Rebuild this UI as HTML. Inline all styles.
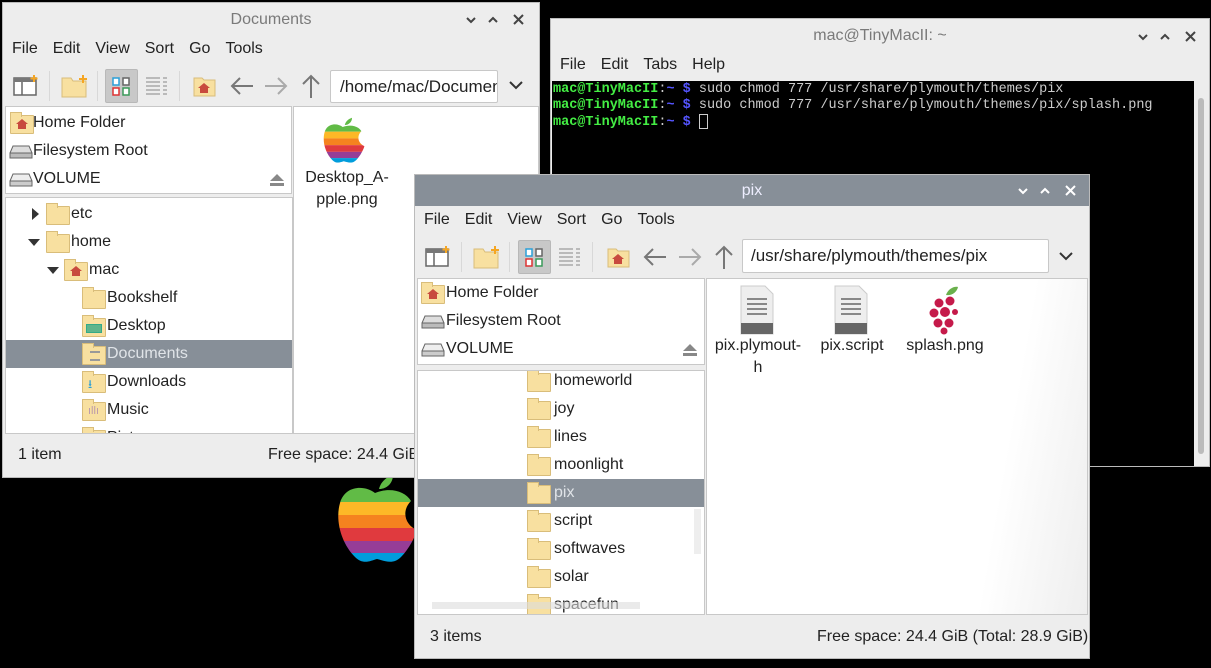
<!DOCTYPE html>
<html><head><meta charset="utf-8"><style>
*{margin:0;padding:0;box-sizing:border-box}
body{width:1211px;height:668px;background:#000;position:relative;overflow:hidden;font-family:"Liberation Sans",sans-serif;font-size:16px;color:#222}
.a{position:absolute}
.win{position:absolute;background:#ededed;border:1px solid #bbb;overflow:hidden}
.title{position:absolute;left:0;right:0;top:0;text-align:center;color:#7a7a7a;font-size:16px}
.menu span{margin-right:15px}
.box{position:absolute;background:#fff;border:1px solid #c8c8c8;overflow:hidden}
.row{position:absolute;left:0;right:0;height:28px;line-height:28px;white-space:nowrap}
.fold{position:absolute;width:24px;height:19px;background:#f8e0a0;border:1px solid #d9bd7a;border-radius:1px}
.fold:before{content:"";position:absolute;left:-1px;top:-4px;width:10px;height:4px;background:#f8e0a0;border:1px solid #d9bd7a;border-bottom:none}
.sel{background:#878f98;color:#e0e4e8}
.mono{font-family:"Liberation Mono",monospace;font-size:13.5px}
</style></head><body>

<svg class="a" style="left:335px;top:475px" width="85" height="90" viewBox="0 0 85 90">
<defs><clipPath id="ap"><path d="M40 18 C30 10 10 10 5 28 C0 45 6 68 20 82 C28 90 35 86 42 84 C50 86 58 90 66 82 C74 74 80 62 82 55 C70 50 66 36 76 26 C70 16 55 12 40 18Z"/></clipPath></defs>
<path d="M44 14 C46 6 52 2 58 0 C58 8 52 14 44 14Z" fill="#61bb46"/>
<g clip-path="url(#ap)"><rect y="0" width="85" height="27" fill="#61bb46"/><rect y="27" width="85" height="13" fill="#fdb827"/><rect y="40" width="85" height="13" fill="#f5821f"/><rect y="53" width="85" height="13" fill="#e03a3e"/><rect y="66" width="85" height="12" fill="#963d97"/><rect y="78" width="85" height="12" fill="#009ddc"/></g>
</svg>

<!-- Documents window -->
<div class="win" style="left:2px;top:2px;width:538px;height:476px">
 <div class="title" style="top:8px">Documents</div>
 <svg class="a" style="left:462px;top:10px" width="66" height="14" fill="none" stroke="#444" stroke-width="2"><path d="M2 5l4 4 4-4M24 9l4-4 4 4M49 2l9 9M58 2l-9 9"/></svg>
 <div class="a menu" style="left:9px;top:37px">
  <span>File</span><span>Edit</span><span>View</span><span>Sort</span><span>Go</span><span>Tools</span></div>
 <div class="a" style="left:0;top:62px;width:538px;height:42px">
  <svg class="a" style="left:10px;top:10px" width="26" height="24"><rect x="1" y="3" width="22" height="17" fill="#fff" stroke="#666" stroke-width="1.5"/><rect x="1" y="3" width="22" height="4" fill="#777"/><line x1="9" y1="7" x2="9" y2="20" stroke="#666" stroke-width="1.5"/><path d="M21 0v7M17.5 3.5h7" stroke="#f5a623" stroke-width="2"/></svg>
  <div class="a" style="left:46px;top:6px;width:1px;height:30px;background:#d8d8d8"></div>
  <svg class="a" style="left:58px;top:8px" width="28" height="26"><path d="M1 5h9l2 3h13v16H1z" fill="#f8e0a0" stroke="#d9bd7a"/><path d="M22 2v8M18 6h8" stroke="#f5a623" stroke-width="2"/></svg>
  <div class="a" style="left:94px;top:6px;width:1px;height:30px;background:#d8d8d8"></div>
  <div class="a" style="left:102px;top:4px;width:33px;height:34px;background:#c8c8c8;border:1px solid #b8b8b8;border-radius:2px"></div>
  <svg class="a" style="left:109px;top:12px" width="20" height="20"><rect x="1" y="1" width="6" height="7" fill="#fff" stroke="#2a9fd8" stroke-width="1.5"/><rect x="11" y="1" width="6" height="7" fill="#fff" stroke="#666" stroke-width="1.5"/><rect x="1" y="11" width="6" height="7" fill="#fff" stroke="#d33" stroke-width="1.5"/><rect x="11" y="11" width="6" height="7" fill="#fff" stroke="#3a9a5a" stroke-width="1.5"/></svg>
  <svg class="a" style="left:142px;top:10px" width="24" height="24" stroke="#888"><path d="M1 3h14M1 7h14M1 11h14M1 15h14M1 19h14M18 3h4M18 7h4M18 11h4M18 15h4M18 19h4"/></svg>
  <div class="a" style="left:176px;top:6px;width:1px;height:30px;background:#d8d8d8"></div>
  <svg class="a" style="left:190px;top:10px" width="24" height="22"><path d="M1 3h8l2 2h11v16H1z" fill="#f8e0a0" stroke="#d9bd7a"/><path d="M11 8l-6 5h2v5h8v-5h2z" fill="#c84a3e"/></svg>
  <svg class="a" style="left:226px;top:10px" width="26" height="22" fill="none" stroke="#777" stroke-width="2"><path d="M24 11H3M11 3l-8 8 8 8"/></svg>
  <svg class="a" style="left:260px;top:10px" width="26" height="22" fill="none" stroke="#aaa" stroke-width="2"><path d="M2 11h21M15 3l8 8-8 8"/></svg>
  <svg class="a" style="left:297px;top:8px" width="22" height="26" fill="none" stroke="#777" stroke-width="2"><path d="M11 25V3M3 11l8-8 8 8"/></svg>
  <div class="a" style="left:327px;top:5px;width:168px;height:33px;background:#fff;border:1px solid #c8c8c8;border-radius:2px;line-height:31px;padding-left:9px;overflow:hidden;white-space:nowrap;font-size:17px">/home/mac/Documents</div>
  <svg class="a" style="left:505px;top:14px" width="16" height="12" fill="none" stroke="#333" stroke-width="2"><path d="M2 3l6 6 6-6"/></svg>
 </div>
 <div class="box" style="left:2px;top:103px;width:287px;height:88px">
  <div class="row" style="top:2px"><div class="fold" style="left:4px;top:6px"></div><svg class="a" style="left:10px;top:9px" width="12" height="12"><path d="M6 1L0 6h2v5h8V6h2z" fill="#c84a3e"/></svg><span style="margin-left:27px">Home Folder</span></div>
  <div class="row" style="top:30px"><svg class="a" style="left:3px;top:8px" width="24" height="14"><path d="M4 1h16l3 7v5H1V8z" fill="#ddd" stroke="#666"/><rect x="1" y="8" width="22" height="5" fill="#bbb" stroke="#666"/></svg><span style="margin-left:27px">Filesystem Root</span></div>
  <div class="row" style="top:58px"><svg class="a" style="left:3px;top:8px" width="24" height="14"><path d="M4 1h16l3 7v5H1V8z" fill="#eee" stroke="#666"/><rect x="1" y="8" width="22" height="5" fill="#ccc" stroke="#666"/></svg><span style="margin-left:27px">VOLUME</span><svg class="a" style="left:264px;top:9px" width="14" height="12"><path d="M7 0l7 7H0z M0 9h14v3H0z" fill="#888"/></svg></div>
 </div>
 <div class="box" style="left:2px;top:194px;width:288px;height:237px">
  <div class="row" style="top:2px"><svg class="a" style="left:26px;top:8px" width="8" height="12"><path d="M0 0l7 6-7 6z" fill="#333"/></svg><div class="fold" style="left:40px;top:6px"></div><span style="margin-left:65px">etc</span></div>
  <div class="row" style="top:30px"><svg class="a" style="left:22px;top:11px" width="12" height="8"><path d="M0 0h12L6 7z" fill="#333"/></svg><div class="fold" style="left:40px;top:6px"></div><span style="margin-left:65px">home</span></div>
  <div class="row" style="top:58px"><svg class="a" style="left:41px;top:11px" width="12" height="8"><path d="M0 0h12L6 7z" fill="#333"/></svg><div class="fold" style="left:58px;top:6px"></div><svg class="a" style="left:64px;top:9px" width="12" height="12"><path d="M6 1L0 6h2v5h8V6h2z" fill="#c84a3e"/></svg><span style="margin-left:83px">mac</span></div>
  <div class="row" style="top:86px"><div class="fold" style="left:76px;top:6px"></div><span style="margin-left:101px">Bookshelf</span></div>
  <div class="row" style="top:114px"><div class="fold" style="left:76px;top:6px"></div><div class="a" style="left:80px;top:12px;width:16px;height:9px;background:#5fb58c;border:1px solid #3a8"></div><span style="margin-left:101px">Desktop</span></div>
  <div class="row sel" style="top:142px"><div class="fold" style="left:76px;top:6px"></div><div class="a" style="left:84px;top:11px;width:10px;height:10px;border-top:2px solid #999;border-bottom:2px solid #999"></div><span style="margin-left:101px">Documents</span></div>
  <div class="row" style="top:170px"><div class="fold" style="left:76px;top:6px"></div><div class="a" style="left:82px;top:9px;color:#2a9fd8;font-size:12px;line-height:14px">⭳</div><span style="margin-left:101px">Downloads</span></div>
  <div class="row" style="top:198px"><div class="fold" style="left:76px;top:6px"></div><div class="a" style="left:82px;top:8px;color:#b9a;font-size:11px;line-height:14px">ıllı</div><span style="margin-left:101px">Music</span></div>
  <div class="row" style="top:226px"><div class="fold" style="left:76px;top:6px"></div><span style="margin-left:101px">Pictures</span></div>
 </div>
 <div class="box" style="left:290px;top:103px;width:246px;height:328px">
  <svg class="a" style="left:28px;top:10px" width="44" height="48" viewBox="0 0 85 90"><defs><clipPath id="ap2"><path d="M40 18 C30 10 10 10 5 28 C0 45 6 68 20 82 C28 90 35 86 42 84 C50 86 58 90 66 82 C74 74 80 62 82 55 C70 50 66 36 76 26 C70 16 55 12 40 18Z"/></clipPath></defs><path d="M44 14 C46 6 52 2 58 0 C58 8 52 14 44 14Z" fill="#61bb46"/><g clip-path="url(#ap2)"><rect width="85" height="27" fill="#61bb46"/><rect y="27" width="85" height="13" fill="#fdb827"/><rect y="40" width="85" height="13" fill="#f5821f"/><rect y="53" width="85" height="13" fill="#e03a3e"/><rect y="66" width="85" height="12" fill="#963d97"/><rect y="78" width="85" height="12" fill="#009ddc"/></g></svg>
  <div class="a" style="left:8px;top:60px;width:90px;text-align:center;line-height:22px">Desktop_A-<br>pple.png</div>
 </div>
 <div class="a" style="left:15px;top:443px">1 item</div>
 <div class="a" style="left:265px;top:443px">Free space: 24.4 GiB</div>
</div>

<!-- Terminal -->
<div class="win" style="left:550px;top:18px;width:660px;height:449px">
 <div class="title" style="top:8px">mac@TinyMacII: ~</div>
 <svg class="a" style="left:586px;top:11px" width="66" height="14" fill="none" stroke="#444" stroke-width="2"><path d="M2 5l4 4 4-4M24 9l4-4 4 4M49 2l9 9M58 2l-9 9"/></svg>
 <div class="a menu" style="left:9px;top:37px"><span>File</span><span>Edit</span><span>Tabs</span><span>Help</span></div>
 <div class="a mono" style="left:1px;top:62px;width:642px;height:386px;background:#000;color:#ccc;padding:1px 1px;line-height:16px;white-space:pre"><b style="color:#4e4">mac@TinyMacII</b><span>:</span><b style="color:#55f">~ $</b> sudo chmod 777 /usr/share/plymouth/themes/pix
<b style="color:#4e4">mac@TinyMacII</b>:<b style="color:#55f">~ $</b> sudo chmod 777 /usr/share/plymouth/themes/pix/splash.png
<b style="color:#4e4">mac@TinyMacII</b>:<b style="color:#55f">~ $</b> <span style="display:inline-block;width:9px;height:15px;border:1px solid #ccc;vertical-align:middle"></span></div>
 <div class="a" style="left:643px;top:62px;width:16px;height:386px;background:#ededed"></div>
 <div class="a" style="left:647px;top:79px;width:6px;height:356px;background:#bbb;border-radius:3px"></div>
</div>

<!-- pix window -->
<div class="win" style="left:414px;top:174px;width:676px;height:485px">
 <div class="a" style="left:0;top:0;width:676px;height:31px;background:#878f98"></div>
 <div class="title" style="top:7px;color:#eef">pix</div>
 <svg class="a" style="left:602px;top:9px" width="66" height="14" fill="none" stroke="#fff" stroke-width="2"><path d="M2 5l4 4 4-4M24 9l4-4 4 4M49 2l9 9M58 2l-9 9"/></svg>
 <div class="a menu" style="left:9px;top:36px"><span>File</span><span>Edit</span><span>View</span><span>Sort</span><span>Go</span><span>Tools</span></div>
 <div class="a" style="left:0;top:61px;width:676px;height:42px">
  <svg class="a" style="left:10px;top:10px" width="26" height="24"><rect x="1" y="3" width="22" height="17" fill="#fff" stroke="#666" stroke-width="1.5"/><rect x="1" y="3" width="22" height="4" fill="#777"/><line x1="9" y1="7" x2="9" y2="20" stroke="#666" stroke-width="1.5"/><path d="M21 0v7M17.5 3.5h7" stroke="#f5a623" stroke-width="2"/></svg>
  <div class="a" style="left:46px;top:6px;width:1px;height:30px;background:#d8d8d8"></div>
  <svg class="a" style="left:58px;top:8px" width="28" height="26"><path d="M1 5h9l2 3h13v16H1z" fill="#f8e0a0" stroke="#d9bd7a"/><path d="M22 2v8M18 6h8" stroke="#f5a623" stroke-width="2"/></svg>
  <div class="a" style="left:94px;top:6px;width:1px;height:30px;background:#d8d8d8"></div>
  <div class="a" style="left:103px;top:4px;width:33px;height:34px;background:#c8c8c8;border:1px solid #b8b8b8;border-radius:2px"></div>
  <svg class="a" style="left:110px;top:12px" width="20" height="20"><rect x="1" y="1" width="6" height="7" fill="#fff" stroke="#2a9fd8" stroke-width="1.5"/><rect x="11" y="1" width="6" height="7" fill="#fff" stroke="#666" stroke-width="1.5"/><rect x="1" y="11" width="6" height="7" fill="#fff" stroke="#d33" stroke-width="1.5"/><rect x="11" y="11" width="6" height="7" fill="#fff" stroke="#3a9a5a" stroke-width="1.5"/></svg>
  <svg class="a" style="left:143px;top:10px" width="24" height="24" stroke="#888"><path d="M1 3h14M1 7h14M1 11h14M1 15h14M1 19h14M18 3h4M18 7h4M18 11h4M18 15h4M18 19h4"/></svg>
  <div class="a" style="left:177px;top:6px;width:1px;height:30px;background:#d8d8d8"></div>
  <svg class="a" style="left:192px;top:10px" width="24" height="22"><path d="M1 3h8l2 2h11v16H1z" fill="#f8e0a0" stroke="#d9bd7a"/><path d="M11 8l-6 5h2v5h8v-5h2z" fill="#c84a3e"/></svg>
  <svg class="a" style="left:227px;top:10px" width="26" height="22" fill="none" stroke="#777" stroke-width="2"><path d="M24 11H3M11 3l-8 8 8 8"/></svg>
  <svg class="a" style="left:262px;top:10px" width="26" height="22" fill="none" stroke="#aaa" stroke-width="2"><path d="M2 11h21M15 3l8 8-8 8"/></svg>
  <svg class="a" style="left:298px;top:8px" width="22" height="26" fill="none" stroke="#777" stroke-width="2"><path d="M11 25V3M3 11l8-8 8 8"/></svg>
  <div class="a" style="left:327px;top:3px;width:307px;height:34px;background:#fff;border:1px solid #c8c8c8;border-radius:2px;line-height:32px;padding-left:8px;white-space:nowrap;font-size:17px">/usr/share/plymouth/themes/pix</div>
  <svg class="a" style="left:643px;top:14px" width="16" height="12" fill="none" stroke="#333" stroke-width="2"><path d="M2 3l6 6 6-6"/></svg>
 </div>
 <div class="box" style="left:2px;top:103px;width:288px;height:87px">
  <div class="row" style="top:0px"><div class="fold" style="left:3px;top:6px"></div><svg class="a" style="left:9px;top:9px" width="12" height="12"><path d="M6 1L0 6h2v5h8V6h2z" fill="#c84a3e"/></svg><span style="margin-left:28px">Home Folder</span></div>
  <div class="row" style="top:28px"><svg class="a" style="left:3px;top:8px" width="24" height="14"><path d="M4 1h16l3 7v5H1V8z" fill="#ddd" stroke="#666"/><rect x="1" y="8" width="22" height="5" fill="#bbb" stroke="#666"/></svg><span style="margin-left:28px">Filesystem Root</span></div>
  <div class="row" style="top:56px"><svg class="a" style="left:3px;top:8px" width="24" height="14"><path d="M4 1h16l3 7v5H1V8z" fill="#eee" stroke="#666"/><rect x="1" y="8" width="22" height="5" fill="#ccc" stroke="#666"/></svg><span style="margin-left:28px">VOLUME</span><svg class="a" style="left:265px;top:9px" width="14" height="12"><path d="M7 0l7 7H0z M0 9h14v3H0z" fill="#888"/></svg></div>
 </div>
 <div class="box" style="left:2px;top:195px;width:288px;height:245px">
  <div class="row" style="top:-4px"><div class="fold" style="left:109px;top:6px"></div><span style="margin-left:136px">homeworld</span></div>
  <div class="row" style="top:24px"><div class="fold" style="left:109px;top:6px"></div><span style="margin-left:136px">joy</span></div>
  <div class="row" style="top:52px"><div class="fold" style="left:109px;top:6px"></div><span style="margin-left:136px">lines</span></div>
  <div class="row" style="top:80px"><div class="fold" style="left:109px;top:6px"></div><span style="margin-left:136px">moonlight</span></div>
  <div class="row sel" style="top:108px"><div class="fold" style="left:109px;top:6px"></div><span style="margin-left:136px">pix</span></div>
  <div class="row" style="top:136px"><div class="fold" style="left:109px;top:6px"></div><span style="margin-left:136px">script</span></div>
  <div class="row" style="top:164px"><div class="fold" style="left:109px;top:6px"></div><span style="margin-left:136px">softwaves</span></div>
  <div class="row" style="top:192px"><div class="fold" style="left:109px;top:6px"></div><span style="margin-left:136px">solar</span></div>
  <div class="row" style="top:220px"><div class="fold" style="left:109px;top:6px"></div><span style="margin-left:136px">spacefun</span></div>
  <div class="a" style="left:14px;top:231px;width:208px;height:7px;background:rgba(220,220,220,.6)"></div>
  <div class="a" style="left:276px;top:138px;width:7px;height:45px;background:#eee"></div>
 </div>
 <div class="box" style="left:291px;top:103px;width:382px;height:337px;background:linear-gradient(100deg,#fff 75%,#eee)">
  <svg class="a" style="left:33px;top:6px" width="34" height="50"><path d="M1 1h24l8 8v40H1z" fill="#eee" stroke="#ccc"/><rect x="1" y="38" width="32" height="11" fill="#666"/><path d="M7 14h20M7 19h20M7 24h20M7 29h20" stroke="#888" stroke-width="2"/></svg>
  <svg class="a" style="left:127px;top:6px" width="34" height="50"><path d="M1 1h24l8 8v40H1z" fill="#eee" stroke="#ccc"/><rect x="1" y="38" width="32" height="11" fill="#666"/><path d="M7 14h20M7 19h20M7 24h20M7 29h20" stroke="#888" stroke-width="2"/></svg>
  <svg class="a" style="left:221px;top:6px" width="36" height="50"><path d="M18 10c2-6 8-9 12-8-1 5-6 9-12 8z" fill="#6ab04c"/><g fill="#c51a4a"><circle cx="11" cy="18" r="4.5"/><circle cx="22" cy="16" r="4.5"/><circle cx="6" cy="28" r="4.5"/><circle cx="17" cy="27" r="5"/><circle cx="10" cy="38" r="4.5"/><circle cx="21" cy="38" r="4.5"/><circle cx="16" cy="46" r="3.5"/><circle cx="27" cy="27" r="3"/></g></svg>
  <div class="a" style="left:6px;top:56px;width:90px;text-align:center;line-height:22px">pix.plymout-<br>h</div>
  <div class="a" style="left:100px;top:56px;width:90px;text-align:center;line-height:22px">pix.script</div>
  <div class="a" style="left:193px;top:56px;width:90px;text-align:center;line-height:22px">splash.png</div>
 </div>
 <div class="a" style="left:15px;top:453px">3 items</div>
 <div class="a" style="left:402px;top:453px">Free space: 24.4 GiB (Total: 28.9 GiB)</div>
</div>
</body></html>
